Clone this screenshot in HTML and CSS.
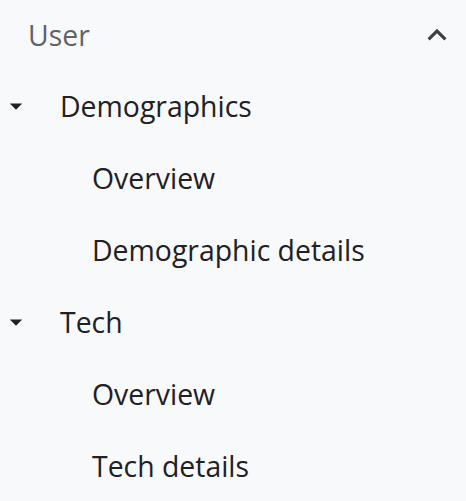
FILE: index.html
```html
<!DOCTYPE html>
<html lang="en">

<head>
    <meta charset="UTF-8">
    <meta name="viewport" content="width=device-width, initial-scale=1.0">
    <title>User</title>
    <link rel="stylesheet" href="styles.css">
</head>

<body>
    <nav class="nav">
        <div class="section-head">
            <span class="section-title">User</span>
            <svg class="chevron" viewBox="0 0 24 24">
                <path d="M7.41 15.41 12 10.83l4.59 4.58L18 14l-6-6-6 6z" />
            </svg>
        </div>

        <div class="group">
            <div class="group-head">
                <svg class="caret" viewBox="0 0 24 24"><path d="M7 10l5 5 5-5z" /></svg>
                <span>Demographics</span>
            </div>
            <a class="item">Overview</a>
            <a class="item">Demographic details</a>
        </div>

        <div class="group">
            <div class="group-head">
                <svg class="caret" viewBox="0 0 24 24"><path d="M7 10l5 5 5-5z" /></svg>
                <span>Tech</span>
            </div>
            <a class="item">Overview</a>
            <a class="item">Tech details</a>
        </div>
    </nav>
</body>

</html>
```

FILE: styles.css
```css
body {
    margin: 0;
    padding: 0;
    background-color: #f8f9fa;
    font-family: "Open Sans", Roboto, sans-serif;
    color: #202124;
}

.nav {
    display: flex;
    flex-direction: column;
}

.section-head {
    display: flex;
    align-items: center;
    justify-content: space-between;
    height: 70px;
    padding: 0 10px 0 28px;
}

.section-title {
    font-size: 28.4px;
    font-weight: 500;
    color: #5f6368;
}

.chevron {
    width: 38px;
    height: 38px;
    fill: #3c4043;
}

.group-head,
.item {
    display: flex;
    align-items: center;
    height: 72px;
    font-size: 28.4px;
    font-weight: 500;
}

.group-head {
    padding-left: 1px;
}

.caret {
    width: 30px;
    height: 30px;
    fill: #202124;
    margin-right: 29px;
}

.item {
    padding-left: 92px;
}
```
